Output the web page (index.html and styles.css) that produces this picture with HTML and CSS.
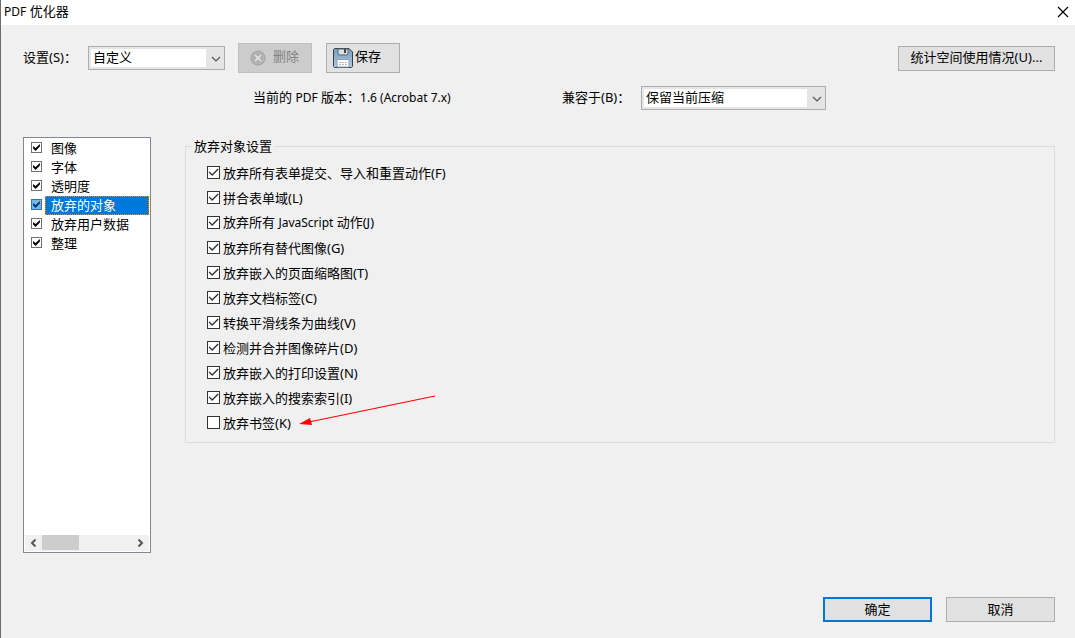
FILE: index.html
```html
<!DOCTYPE html>
<html lang="zh-CN">
<head>
  <meta charset="UTF-8">
  <meta name="viewport" content="width=device-width, initial-scale=1.0">
  <title>PDF 优化器</title>
  <link rel="stylesheet" href="styles.css">
</head>
<body>
  <form class="dialog">
    <header class="titlebar">
      <h1><span class="latin">PDF</span> 优化器</h1>
      <button type="button" class="close" aria-label="关闭">
        <svg width="12" height="12" viewBox="0 0 12 12"><path d="M1 1L11 11M11 1L1 11" stroke="#000" stroke-width="1.2" fill="none"/></svg>
      </button>
    </header>

    <div class="content">
      <div class="toolbar">
        <label class="preset-label" for="preset">设置(S)：</label>
        <div class="select preset">
          <select id="preset"><option>自定义</option></select>
          <svg width="10" height="6" viewBox="0 0 10 6"><path d="M1 1L5 5L9 1" stroke="#555" stroke-width="1.2" fill="none"/></svg>
        </div>
        <button type="button" class="tool delete" disabled>
          <svg width="16" height="16" viewBox="0 0 16 16">
            <circle cx="8" cy="8" r="7" fill="#b4b4b4" stroke="#a0a0a0"/>
            <path d="M5 5L11 11M11 5L5 11" stroke="#a0a0a0" stroke-width="3.6"/>
            <path d="M5 5L11 11M11 5L5 11" stroke="#dedede" stroke-width="2.2"/>
          </svg>
          <span>删除</span>
        </button>
        <button type="button" class="tool save">
          <svg width="20" height="20" viewBox="0 0 20 20">
            <defs>
              <linearGradient id="disk" x1="0" y1="0" x2="0" y2="1">
                <stop offset="0" stop-color="#7b9dbb"/>
                <stop offset="1" stop-color="#a9cbe6"/>
              </linearGradient>
            </defs>
            <path d="M1.5 .5H16L19.5 4V18.500L18.500 19.500H1.500L.5 18.500V1.500Z" fill="url(#disk)" stroke="#33414d"/>
            <path d="M5 1H15V6L14 7H6L5 6Z" fill="#dcdfe2" stroke="#56646f"/>
            <rect x="11" y="1" width="2" height="4" fill="#3c4750"/>
            <path d="M4 19V11.500H16V19Z" fill="#fff" stroke="#8fa3b3"/>
            <path d="M6 14.500H15M6 16.500H15" stroke="#b4b9bd" stroke-dasharray="2 1"/>
          </svg>
          <span>保存</span>
        </button>
        <button type="button" class="btn audit">统计空间使用情况(U)...</button>
      </div>

      <div class="version">
        <span class="current">当前的 <span class="latin">PDF</span> 版本：<span class="latin">1.6 (Acrobat 7.x)</span></span>
        <label class="compat-label" for="compat">兼容于(B)：</label>
        <div class="select compat">
          <select id="compat"><option>保留当前压缩</option></select>
          <svg width="10" height="6" viewBox="0 0 10 6"><path d="M1 1L5 5L9 1" stroke="#555" stroke-width="1.2" fill="none"/></svg>
        </div>
      </div>

      <div class="main">
        <div class="panel">
          <ul class="sections">
            <li><input type="checkbox" id="s1" checked><label for="s1">图像</label></li>
            <li><input type="checkbox" id="s2" checked><label for="s2">字体</label></li>
            <li><input type="checkbox" id="s3" checked><label for="s3">透明度</label></li>
            <li class="selected"><input type="checkbox" id="s4" checked><label for="s4">放弃的对象</label></li>
            <li><input type="checkbox" id="s5" checked><label for="s5">放弃用户数据</label></li>
            <li><input type="checkbox" id="s6" checked><label for="s6">整理</label></li>
          </ul>
          <div class="scrollbar">
            <button type="button" aria-label="向左滚动">
              <svg width="7" height="8" viewBox="0 0 7 8"><path d="M5.500 .5L2 4L5.500 7.500" stroke="#555" stroke-width="2" fill="none"/></svg>
            </button>
            <div class="track"><div class="thumb"></div></div>
            <button type="button" aria-label="向右滚动">
              <svg width="7" height="8" viewBox="0 0 7 8"><path d="M1.500 .5L5 4L1.500 7.500" stroke="#555" stroke-width="2" fill="none"/></svg>
            </button>
          </div>
        </div>

        <fieldset>
          <legend>放弃对象设置</legend>
          <ul class="options">
            <li><input type="checkbox" id="o1" checked><label for="o1">放弃所有表单提交、导入和重置动作(F)</label></li>
            <li><input type="checkbox" id="o2" checked><label for="o2">拼合表单域(L)</label></li>
            <li><input type="checkbox" id="o3" checked><label for="o3">放弃所有 <span class="latin">JavaScript</span> 动作(J)</label></li>
            <li><input type="checkbox" id="o4" checked><label for="o4">放弃所有替代图像(G)</label></li>
            <li><input type="checkbox" id="o5" checked><label for="o5">放弃嵌入的页面缩略图(T)</label></li>
            <li><input type="checkbox" id="o6" checked><label for="o6">放弃文档标签(C)</label></li>
            <li><input type="checkbox" id="o7" checked><label for="o7">转换平滑线条为曲线(V)</label></li>
            <li><input type="checkbox" id="o8" checked><label for="o8">检测并合并图像碎片(D)</label></li>
            <li><input type="checkbox" id="o9" checked><label for="o9">放弃嵌入的打印设置(N)</label></li>
            <li><input type="checkbox" id="o10" checked><label for="o10">放弃嵌入的搜索索引(I)</label></li>
            <li>
              <input type="checkbox" id="o11"><label for="o11">放弃书签(K)</label>
              <svg class="pointer" width="138" height="32" viewBox="0 0 138 32">
                <path d="M10 27L136 1" stroke="#f00" stroke-width="1.2"/>
                <path d="M0 29L11 23L13 30Z" fill="#f00"/>
              </svg>
            </li>
          </ul>
        </fieldset>
      </div>

      <footer>
        <button type="submit" class="btn primary">确定</button>
        <button type="button" class="btn">取消</button>
      </footer>
    </div>
  </form>
</body>
</html>
```

FILE: styles.css
```css
* {
  box-sizing: border-box;
}
body {
  margin: 0;
  background-color: #f0f0f0;
  color: #000;
  font-family: "Noto Sans", "Noto Sans CJK SC", sans-serif;
  font-size: 13px;
  line-height: 18px;
}
button, select {
  font: inherit;
  color: inherit;
}
svg {
  display: block;
  flex: none;
}
ul {
  list-style: none;
  margin: 0;
  padding: 0;
}
.latin {
  font-size: 12px;
}
.dialog {
  display: flex;
  flex-direction: column;
  min-height: 100vh;
  border-left: 1px solid #6b6b6b;
}

/* title bar */
.titlebar {
  display: flex;
  justify-content: space-between;
  align-items: center;
  height: 25px;
  padding: 0 6px 2px 3px;
  background-color: #fff;
}
h1 {
  margin: 0;
  font-size: 13px;
  font-weight: normal;
}
.close {
  padding: 0;
  border: none;
  background: none;
}
.content {
  flex: 1;
  display: flex;
  flex-direction: column;
  padding: 18px 20px 16px 22px;
}

/* buttons */
.btn {
  width: 109px;
  height: 25px;
  padding: 0 0 2px;
  border: 1px solid #adadad;
  background-color: #e1e1e1;
}
.btn.primary {
  border: 2px solid #0078d7;
}
.tool {
  display: flex;
  align-items: center;
  width: 74px;
  height: 30px;
  padding: 0 6px;
  border: 1px solid #adadad;
  background-color: #e1e1e1;
}
.tool span {
  padding-bottom: 4px;
}
.tool.delete {
  gap: 7px;
  margin-right: 14px;
  padding-left: 11px;
  border-color: #bfbfbf;
  background-color: #ccc;
  color: #838383;
}
.tool.save {
  gap: 2px;
}

/* drop-downs */
.select {
  position: relative;
}
.select select {
  display: block;
  appearance: none;
  width: 100%;
  height: 24px;
  padding: 0 20px 2px 4px;
  border: 1px solid #adadad;
  border-radius: 0;
  background: linear-gradient(#fff, #fff) 2px 2px / calc(100% - 20px) calc(100% - 4px) no-repeat #e5e5e5;
}
.select svg {
  position: absolute;
  top: 10px;
  right: 4px;
  pointer-events: none;
}
.toolbar,
.version {
  display: flex;
  align-items: center;
}
.toolbar {
  margin-bottom: 13px;
}
.toolbar label,
.version label,
.current {
  padding-bottom: 2px;
}
.preset-label {
  width: 65px;
  white-space: nowrap;
}
.preset {
  width: 137px;
  margin-right: 13px;
}
.audit {
  width: 157px;
  margin-left: auto;
}
.version {
  padding-left: 230px;
}
.current {
  width: 309px;
}
.compat-label {
  width: 79px;
}
.compat {
  width: 185px;
}

/* check boxes */
input[type="checkbox"] {
  appearance: none;
  position: relative;
  flex: none;
  width: 13px;
  height: 13px;
  margin: 0;
  border: 1px solid #333;
  background-color: #fff;
}
input[type="checkbox"]:checked::after {
  content: "";
  position: absolute;
  inset: 0;
  background-color: #333;
  clip-path: polygon(5% 48%, 14% 40%, 38% 64%, 88% 14%, 97% 23%, 38% 82%);
}

/* left list */
.main {
  flex: 1;
  display: flex;
  align-items: flex-start;
  gap: 34px;
  margin-top: 27px;
}
.panel {
  align-self: stretch;
  display: flex;
  flex-direction: column;
  justify-content: space-between;
  width: 128px;
  padding: 1px;
  border: 1px solid #828790;
  background-color: #fff;
}
.sections li {
  display: flex;
  align-items: center;
  height: 19px;
  padding-left: 6px;
}
.sections input[type="checkbox"] {
  width: 11px;
  height: 11px;
  margin-bottom: 2px;
  border-color: #707070;
}
.sections input[type="checkbox"]:checked::after {
  background-color: #000;
  clip-path: polygon(12% 34%, 40% 56%, 88% 12%, 88% 40%, 40% 88%, 12% 60%);
}
.sections label {
  flex: 1;
  height: 19px;
  margin-left: 3px;
  padding: 0 5px;
  border: 1px solid transparent;
  line-height: 16px;
}
.sections .selected label {
  border: 1px dotted #e08a40;
  background-color: #0078d7;
  color: #fff;
}
.sections .selected input[type="checkbox"] {
  border-color: #3874aa;
  background-color: #78b4ec;
}
.sections .selected input[type="checkbox"]:checked::after {
  background-color: #003c6c;
}
.scrollbar {
  display: flex;
  height: 16px;
  background-color: #f0f0f0;
}
.scrollbar button {
  display: flex;
  align-items: center;
  justify-content: center;
  width: 17px;
  padding: 0;
  border: none;
  background: none;
}
.track {
  flex: 1;
}
.thumb {
  width: 37px;
  height: 15px;
  background-color: #cdcdcd;
}

/* discard options */
fieldset {
  flex: 1;
  min-width: 0;
  margin: 0;
  padding: 5px 6px 7px;
  border: 1px solid #dcdcdc;
}
legend {
  padding: 0 2px;
}
.options {
  padding-left: 15px;
}
.options li {
  position: relative;
  display: flex;
  align-items: center;
  gap: 3px;
  height: 25px;
}
.pointer {
  position: absolute;
  left: 92px;
  bottom: 8px;
}

footer {
  display: flex;
  justify-content: flex-end;
  gap: 14px;
  margin-top: 44px;
}
```
